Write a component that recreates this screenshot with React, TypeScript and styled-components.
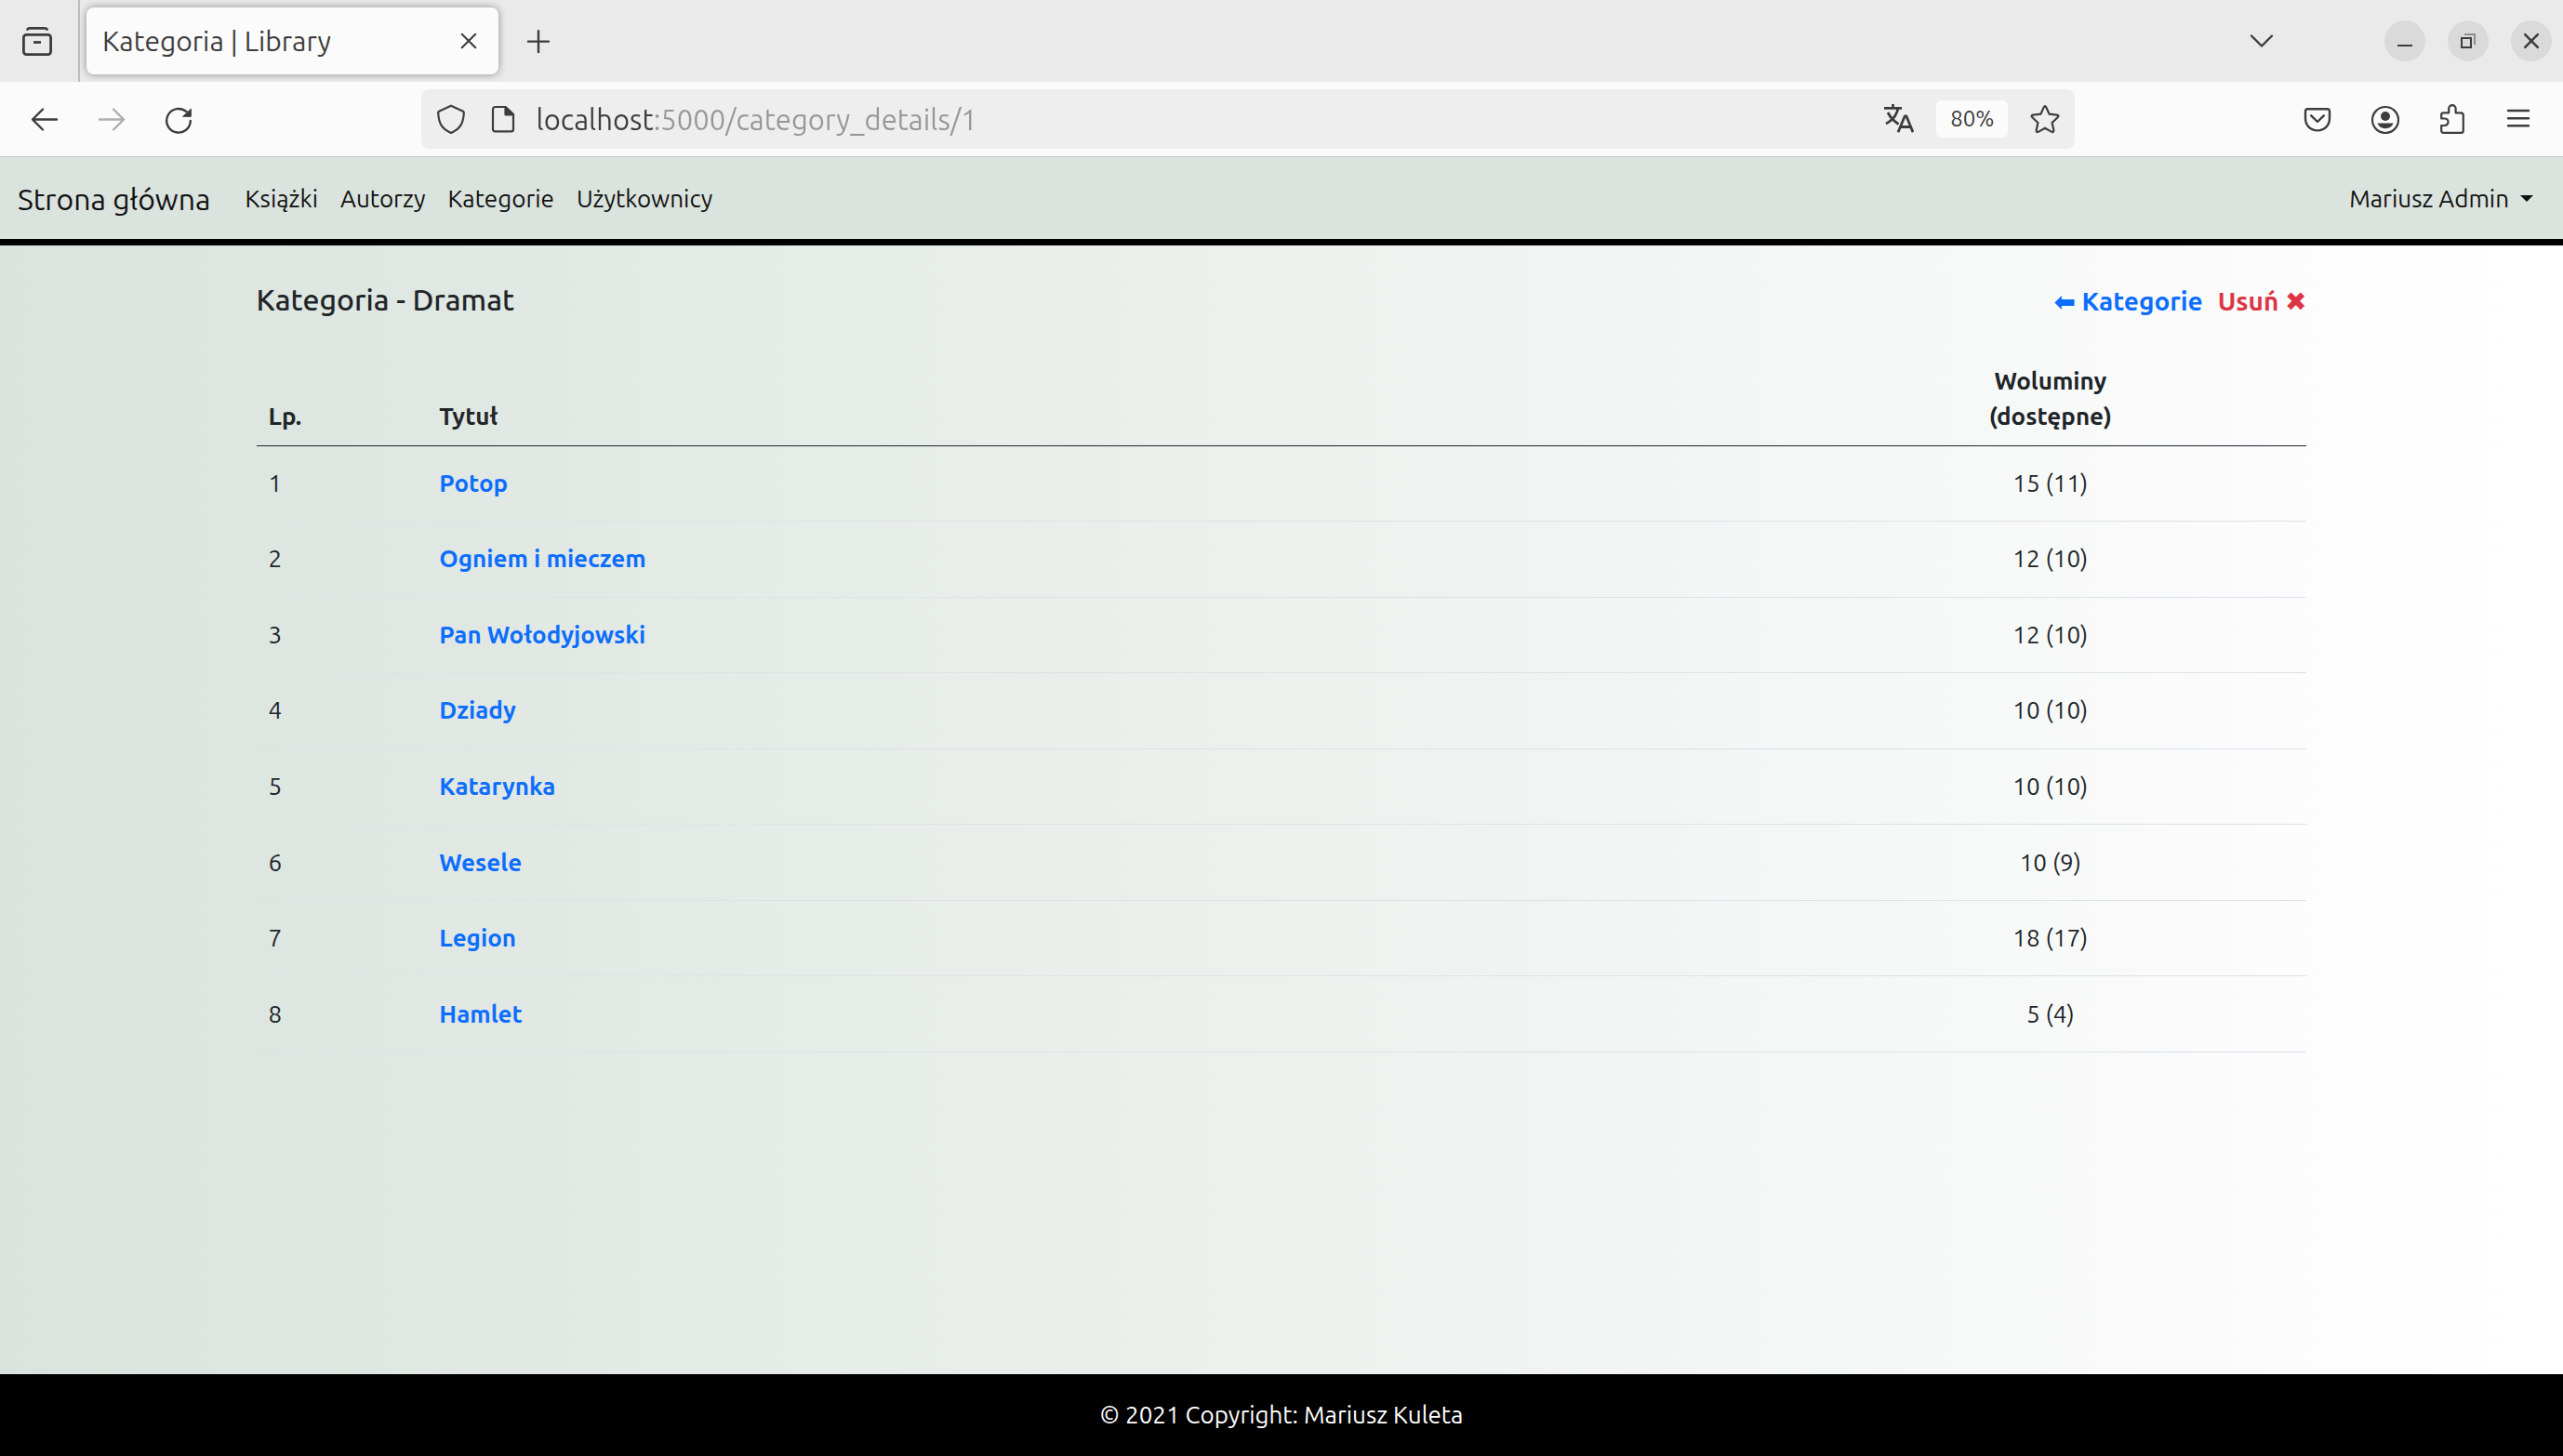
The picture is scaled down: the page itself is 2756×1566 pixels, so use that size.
import React from "react";
import styled, { createGlobalStyle } from "styled-components";

const ink = "#3d3d3d";
const mint = "#dae3dd";

const GlobalStyle = createGlobalStyle`
  *, *::before, *::after { box-sizing: border-box; }
  body {
    margin: 0;
    color: #212529;
    font-family: Ubuntu, "Noto Sans", "DejaVu Sans", sans-serif;
    font-size: 26px;
    line-height: 38px;
  }
  button, input { font: inherit; color: inherit; }
  a { text-decoration: none; }
`;

const Window = styled.div`
  min-height: 100vh;
  display: flex;
  flex-direction: column;
`;

/* ---------- browser chrome ---------- */

const TabStrip = styled.div`
  display: flex;
  align-items: center;
  height: 88px;
  padding-right: 12px;
  background: #eaeaea;
  color: ${ink};
`;

const FirefoxView = styled.div`
  display: flex;
  align-items: center;
  align-self: stretch;
  width: 86px;
  padding-left: 24px;
  border-right: 2px solid #bdbdbd;
`;

const IconButton = styled.button<{ $faded?: boolean }>`
  display: flex;
  flex: none;
  width: 32px;
  height: 32px;
  padding: 0;
  border: 0;
  background: none;
  color: ${ink};
  opacity: ${(p) => (p.$faded ? 0.4 : 1)};
`;

const Tab = styled.div`
  display: flex;
  align-items: center;
  justify-content: space-between;
  width: 443px;
  height: 72px;
  margin: 0 27px 0 7px;
  padding: 0 16px 0 17px;
  border-radius: 8px;
  background: #fbfbfb;
  box-shadow: 0 0 8px rgba(0, 0, 0, 0.4);
  font-size: 30px;
`;

const WindowControls = styled.div`
  display: flex;
  align-items: center;
  gap: 24px;
  margin-left: auto;
`;

const TabListButton = styled(IconButton)`
  margin-right: 92px;
`;

const RoundButton = styled.button`
  display: flex;
  align-items: center;
  justify-content: center;
  width: 44px;
  height: 44px;
  padding: 0;
  border: 0;
  border-radius: 50%;
  background: #dadada;
  color: ${ink};
`;

const Toolbar = styled.div`
  display: flex;
  align-items: center;
  height: 81px;
  padding: 0 32px;
  border-bottom: 1px solid #c8c6c8;
  background: #fbfbfb;
`;

const ToolGroup = styled.div`
  display: flex;
  gap: 40px;
`;

const Spacer = styled.div`
  flex: 7;
`;

const AddressBar = styled.div`
  display: flex;
  flex: 50;
  align-items: center;
  gap: 20px;
  height: 64px;
  padding: 0 16px;
  border-radius: 8px;
  background: #eeeeee;
`;

const AddressActions = styled.div`
  display: flex;
  align-items: center;
  gap: 24px;
`;

const Address = styled.input`
  flex: 1;
  min-width: 0;
  height: 40px;
  padding: 0;
  border: 0;
  outline: 0;
  background: linear-gradient(to right, ${ink} 126px, #979797 126px);
  background-clip: text;
  -webkit-background-clip: text;
  color: transparent;
  font-size: 31px;
`;

const ZoomLevel = styled.button`
  width: 77px;
  height: 40px;
  padding: 0;
  border: 0;
  border-radius: 6px;
  background: #fbfbfb;
  color: ${ink};
  font-size: 24px;
`;

/* ---------- library site ---------- */

const Navbar = styled.nav`
  display: flex;
  align-items: center;
  height: 95px;
  padding: 1px 32px 0 19px;
  border-bottom: 7px solid #000;
  background: ${mint};
`;

const Brand = styled.a`
  margin-right: 25px;
  color: #111;
  font-size: 32px;
`;

const NavLink = styled.a`
  padding: 0 12px;
  color: #111;
`;

const UserMenu = styled.button`
  display: flex;
  align-items: center;
  gap: 12px;
  margin-left: auto;
  padding: 0;
  border: 0;
  background: none;
  color: #111;
`;

const Caret = styled.span`
  border-top: 7px solid #111;
  border-right: 7px solid transparent;
  border-left: 7px solid transparent;
`;

const Main = styled.main`
  flex: 1;
  padding: 38px 10% 0;
  background: linear-gradient(to right, ${mint}, #fff);
`;

const PageHeader = styled.header`
  display: flex;
  align-items: baseline;
  justify-content: space-between;
  line-height: 40px;
  margin-bottom: 39px;
`;

const Heading = styled.h1`
  margin: 0;
  font-size: 32px;
  font-weight: 500;
`;

const Actions = styled.div`
  display: flex;
  gap: 16px;
`;

const ActionLink = styled.a<{ $danger?: boolean }>`
  color: ${(p) => (p.$danger ? "#dc3545" : "#0d6efd")};
  font-size: 28px;
  font-weight: 700;
`;

const BookTable = styled.table`
  width: 100%;
  height: 749px;
  table-layout: fixed;
  border-collapse: collapse;
`;

const Column = styled.col<{ $share: number }>`
  width: ${(p) => p.$share}%;
`;

const HeadCell = styled.th<{ $center?: boolean }>`
  height: 96px;
  padding: 0 13px 12px;
  border-bottom: 1px solid #212529;
  text-align: ${(p) => (p.$center ? "center" : "left")};
  vertical-align: bottom;
`;

const Cell = styled.td<{ $center?: boolean }>`
  padding: 20px 13px;
  border-bottom: 1px solid #dee2e6;
  text-align: ${(p) => (p.$center ? "center" : "left")};
`;

const BookLink = styled.a`
  color: #0d6efd;
  font-weight: 700;
`;

const Footer = styled.footer`
  padding: 25px;
  background: #000;
  color: #fff;
  text-align: center;
`;

/* ---------- icons ---------- */

const Svg = ({ children, width = 2.4 }: { children: React.ReactNode; width?: number }) => (
  <svg width="32" height="32" viewBox="0 0 32 32" fill="none" stroke="currentColor"
    strokeWidth={width} strokeLinecap="round" strokeLinejoin="round" aria-hidden="true">
    {children}
  </svg>
);

const ViewIcon = () => (
  <Svg width={2.8}>
    <path d="M5.5 3.6 Q6 2.3 8 2.3 H24 Q26 2.3 26.5 3.6" />
    <rect x="1.4" y="9.4" width="29.2" height="21.2" rx="3" />
    <path d="M12 17.5 H20" strokeLinecap="butt" />
  </Svg>
);
const CloseIcon = () => <Svg width={2}><path d="M8.7 8.7 L23.3 23.3 M23.3 8.7 L8.7 23.3" /></Svg>;
const PlusIcon = () => <Svg><path d="M16 5.2 V28 M5 16.6 H27" /></Svg>;
const ChevronIcon = () => <Svg><path d="M5 10.5 L16 21.5 L27 10.5" /></Svg>;
const BackIcon = () => <Svg><path d="M29 16.5 H3.5 M14 5.5 L3 16.5 L14 27.5" /></Svg>;
const ForwardIcon = () => <Svg><path d="M3 16.5 H28.5 M18 5.5 L29 16.5 L18 27.5" /></Svg>;
const ReloadIcon = () => (
  <Svg>
    <path d="M28.8 18 A12.8 12.8 0 1 1 24.5 8.2" />
    <path d="M29.3 5.5 V13.3 H21 Z" fill="currentColor" strokeWidth="1" />
  </Svg>
);
const ShieldIcon = () => (
  <Svg width={2.2}>
    <path d="M16 1.7 L29 7.8 Q30 8.4 29.8 10 C29 21 26 26.5 16 31 C6 26.5 3 21 2.2 10 Q2 8.4 3 7.8 Z" />
  </Svg>
);
const PageIcon = () => (
  <Svg width={2.2}>
    <path d="M8 3 H18.5 L27 11 V27 Q27 29.4 24.6 29.4 H7.4 Q5 29.4 5 27 V5.4 Q5 3 8 3 Z" />
    <path d="M18.5 3.2 L27 11.3 H18.5 Z" fill="currentColor" />
  </Svg>
);
const TranslateIcon = () => (
  <Svg width={2.8}>
    <g strokeLinecap="butt">
      <path d="M0 4.3 H19 M9.5 0 V4 M15 4.5 C13.5 12 9 17.5 2 21 M4 9 C7 15 11 18.5 15.5 21.5" />
      <path d="M15 30.2 L22.2 13 H24 L31 30.2 M18 24.5 H28.5" />
    </g>
  </Svg>
);
const StarIcon = () => (
  <Svg width={2.2}>
    <path d="M14.7 3.4 Q16 1 17.3 3.4 L20.6 10.7 L28.8 11.6 Q31.6 12 29.6 14.2 L23.6 20 L25.3 27.8 Q25.6 31 22.8 29.6 L16 25.7 L9.2 29.6 Q6.4 31 6.7 27.8 L8.4 20 L2.4 14.2 Q.4 12 3.2 11.6 L11.4 10.7 Z" />
  </Svg>
);
const PocketIcon = () => (
  <Svg>
    <path d="M5.5 5.2 H26.5 Q29 5.2 29 7.8 V15 C29 23 23.5 28.4 16 28.4 S3 23 3 15 V7.8 Q3 5.2 5.5 5.2 Z" />
    <path d="M9.2 12.3 L16 19 L22.8 12.3" />
  </Svg>
);
const AccountIcon = () => (
  <Svg width={2.2}>
    <circle cx="17" cy="17" r="14" />
    <g fill="currentColor" stroke="none">
      <circle cx="17" cy="13" r="5" />
      <path d="M8.5 20.5 H25.5 C24.5 24 21 26.2 17 26.2 S9.5 24 8.5 20.5 Z" />
    </g>
  </Svg>
);
const PuzzleIcon = () => (
  <Svg width={2.2}>
    <path d="M5.2 15.5 V11.5 Q5.2 9.3 7.4 9.3 H13.2 V4.8 A3.7 3.7 0 0 1 20.6 4.8 V9.3 H26 Q28.8 9.3 28.8 12 V28.4 Q28.8 30.8 26.4 30.8 H7.6 Q5.2 30.8 5.2 28.4 V23 H8.8 A3.7 3.7 0 0 0 8.8 15.5 Z" />
  </Svg>
);
const MenuIcon = () => <Svg><path d="M5 7 H27 M5 15.2 H27 M5 23.2 H27" /></Svg>;
const MinimizeIcon = () => <Svg width={2}><path d="M8 21 H24" strokeLinecap="butt" /></Svg>;
const RestoreIcon = () => (
  <Svg width={2}>
    <g strokeLinejoin="miter" strokeLinecap="butt">
      <rect x="9" y="13" width="10" height="10" />
      <path d="M12 9 H23 V20" opacity=".5" />
    </g>
  </Svg>
);
const WinCloseIcon = () => <Svg width={2.6}><path d="M9.2 9.2 L22.8 22.8 M22.8 9.2 L9.2 22.8" /></Svg>;

/* ---------- data ---------- */

const links = ["Książki", "Autorzy", "Kategorie", "Użytkownicy"];

const books = [
  { title: "Potop", total: 15, available: 11 },
  { title: "Ogniem i mieczem", total: 12, available: 10 },
  { title: "Pan Wołodyjowski", total: 12, available: 10 },
  { title: "Dziady", total: 10, available: 10 },
  { title: "Katarynka", total: 10, available: 10 },
  { title: "Wesele", total: 10, available: 9 },
  { title: "Legion", total: 18, available: 17 },
  { title: "Hamlet", total: 5, available: 4 },
];

export default function App() {
  return (
    <Window>
      <GlobalStyle />
      <TabStrip>
        <FirefoxView>
          <IconButton aria-label="Firefox View"><ViewIcon /></IconButton>
        </FirefoxView>
        <Tab>
          <span>Kategoria | Library</span>
          <IconButton aria-label="Close tab"><CloseIcon /></IconButton>
        </Tab>
        <IconButton aria-label="New tab"><PlusIcon /></IconButton>
        <WindowControls>
          <TabListButton aria-label="List all tabs"><ChevronIcon /></TabListButton>
          <RoundButton aria-label="Minimize"><MinimizeIcon /></RoundButton>
          <RoundButton aria-label="Restore"><RestoreIcon /></RoundButton>
          <RoundButton aria-label="Close window"><WinCloseIcon /></RoundButton>
        </WindowControls>
      </TabStrip>
      <Toolbar>
        <ToolGroup>
          <IconButton aria-label="Back"><BackIcon /></IconButton>
          <IconButton aria-label="Forward" $faded><ForwardIcon /></IconButton>
          <IconButton aria-label="Reload"><ReloadIcon /></IconButton>
        </ToolGroup>
        <Spacer />
        <AddressBar>
          <AddressActions>
            <IconButton aria-label="Tracking protection"><ShieldIcon /></IconButton>
            <IconButton aria-label="Site information"><PageIcon /></IconButton>
          </AddressActions>
          <Address
            type="text"
            aria-label="Address"
            defaultValue="localhost:5000/category_details/1"
            spellCheck={false}
          />
          <AddressActions>
            <IconButton aria-label="Translate"><TranslateIcon /></IconButton>
            <ZoomLevel>80%</ZoomLevel>
            <IconButton aria-label="Bookmark"><StarIcon /></IconButton>
          </AddressActions>
        </AddressBar>
        <Spacer />
        <ToolGroup>
          <IconButton aria-label="Pocket"><PocketIcon /></IconButton>
          <IconButton aria-label="Account"><AccountIcon /></IconButton>
          <IconButton aria-label="Extensions"><PuzzleIcon /></IconButton>
          <IconButton aria-label="Menu"><MenuIcon /></IconButton>
        </ToolGroup>
      </Toolbar>

      <Navbar>
        <Brand href="#">Strona główna</Brand>
        {links.map((label) => (
          <NavLink key={label} href="#">{label}</NavLink>
        ))}
        <UserMenu>
          Mariusz Admin
          <Caret />
        </UserMenu>
      </Navbar>
      <Main>
        <PageHeader>
          <Heading>Kategoria - Dramat</Heading>
          <Actions>
            <ActionLink href="#">⬅ Kategorie</ActionLink>
            <ActionLink href="#" $danger>Usuń ✖</ActionLink>
          </Actions>
        </PageHeader>
        <BookTable>
          <colgroup>
            <Column $share={100 / 12} />
            <Column $share={800 / 12} />
            <Column $share={25} />
          </colgroup>
          <thead>
            <tr>
              <HeadCell scope="col">Lp.</HeadCell>
              <HeadCell scope="col">Tytuł</HeadCell>
              <HeadCell scope="col" $center>Woluminy<br />(dostępne)</HeadCell>
            </tr>
          </thead>
          <tbody>
            {books.map((book, i) => (
              <tr key={book.title}>
                <Cell>{i + 1}</Cell>
                <Cell><BookLink href="#">{book.title}</BookLink></Cell>
                <Cell $center>{book.total} ({book.available})</Cell>
              </tr>
            ))}
          </tbody>
        </BookTable>
      </Main>
      <Footer>© 2021 Copyright: Mariusz Kuleta</Footer>
    </Window>
  );
}
